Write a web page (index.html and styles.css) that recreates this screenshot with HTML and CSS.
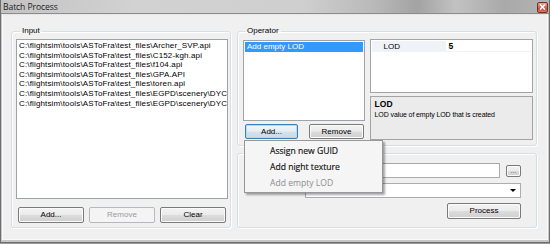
FILE: index.html
```html
<!DOCTYPE html>
<html>
<head>
<meta charset="utf-8">
<link rel="stylesheet" href="styles.css">
</head>
<body>
<div class="window">
  <div class="titlebar">
    <span class="title">Batch Process</span>
    <span class="close"><svg width="7" height="6" viewBox="0 0 7 6"><path d="M1 0.5 L6 5.5 M6 0.5 L1 5.5" stroke="#fff" stroke-width="1.6"/></svg></span>
  </div>
  <div class="client">
    <fieldset class="group input-group">
      <legend>Input</legend>
      <div class="listbox files">
        <div class="item">C:\flightsim\tools\ASToFra\test_files\Archer_SVP.api</div>
        <div class="item">C:\flightsim\tools\ASToFra\test_files\C152-kgh.api</div>
        <div class="item">C:\flightsim\tools\ASToFra\test_files\f104.api</div>
        <div class="item">C:\flightsim\tools\ASToFra\test_files\GPA.API</div>
        <div class="item">C:\flightsim\tools\ASToFra\test_files\toren.api</div>
        <div class="item">C:\flightsim\tools\ASToFra\test_files\EGPD\scenery\DYCE</div>
        <div class="item">C:\flightsim\tools\ASToFra\test_files\EGPD\scenery\DYCE</div>
      </div>
      <div class="btnrow input-btns">
        <button class="btn">Add...</button>
        <button class="btn disabled">Remove</button>
        <button class="btn">Clear</button>
      </div>
    </fieldset>
    <div class="rightcol">
      <fieldset class="group op-group">
        <legend>Operator</legend>
        <div class="op-body">
          <div class="op-left">
            <div class="listbox ops">
              <div class="item sel">Add empty LOD</div>
            </div>
            <div class="btnrow op-btns">
              <button class="btn focus">Add...</button>
              <button class="btn">Remove</button>
            </div>
          </div>
          <div class="op-right">
            <div class="propgrid">
              <div class="prow"><span class="pname">LOD</span><span class="pval">5</span></div>
            </div>
            <div class="desc">
              <div class="desc-title">LOD</div>
              <div class="desc-text">LOD value of empty LOD that is created</div>
            </div>
          </div>
        </div>
      </fieldset>
      <fieldset class="group out-group">
        <legend>Output</legend>
        <div class="out-grid">
          <span class="lbl"></span>
          <div class="textbox"></div>
          <button class="btn small">...</button>
          <span class="lbl"></span>
          <div class="combo"><span class="combo-text"></span><span class="arrow"></span></div>
          <div class="process-row"><button class="btn process">Process</button></div>
        </div>
      </fieldset>
    </div>
  </div>
  <div class="menu">
    <div class="mitem">Assign new GUID</div>
    <div class="mitem">Add night texture</div>
    <div class="mitem disabled">Add empty LOD</div>
  </div>
</div>
</body>
</html>
```

FILE: styles.css
```css
* { box-sizing: border-box; }
html, body { margin: 0; padding: 0; }
body { background: #9a9a9a; width: 550px; height: 244px; overflow: hidden; }

.window {
  position: relative;
  width: 550px;
  height: 243px;
  display: flex;
  flex-direction: column;
  border: 1px solid #6e6e6e;
  border-top: none;
  background: #c6c6c6;
  font-family: "Liberation Sans", Arial, sans-serif;
  font-size: 8px;
  color: #000;
}

.titlebar {
  height: 14px;
  display: flex;
  align-items: center;
  justify-content: space-between;
  padding: 0 1px 0 2px;
  background: linear-gradient(to right, #c3c3c3 0%, #d2d2d2 25%, #cfcfcf 55%, #b9b9b9 68%, #a3a3a3 76%, #c2c2c2 83%, #a9a9a9 92%, #b4b4b4 100%);
  border-bottom: 1px solid #8d8d8d;
}
.title {
  font-family: "Open Sans", "Liberation Sans", sans-serif;
  font-size: 8.6px;
  color: #1a1a1a;
  letter-spacing: -0.1px;
}
.close {
  width: 11px;
  height: 11px;
  border: 1px solid #7d2d25;
  border-radius: 2px;
  background: linear-gradient(#e9a497, #d0604f 50%, #c23a27 51%, #d97a62);
  display: flex;
  align-items: center;
  justify-content: center;
  margin-top: 1px;
}

.client {
  flex: 1;
  display: flex;
  align-items: flex-start;
  gap: 6px;
  margin: 0 1px 2px 1px;
  padding: 11px 10px 0 8px;
  background: #f0f0f0;
  border: 1px solid #fafafa;
  border-top-color: #e6e6e6;
}

.group {
  margin: 0;
  border: 1px solid #d5dfe5;
  border-radius: 3px;
  box-shadow: inset 1px 1px 0 #fff, 1px 1px 0 #fff;
  min-width: 0;
}
legend {
  padding: 0 2px;
  margin-left: 4px;
  line-height: 10px;
  height: 10px;
  font-size: 8px;
}

.input-group {
  width: 221px;
  height: 202px;
  padding: 3px 2px 4px 4px;
  display: flex;
  flex-direction: column;
}

.listbox {
  background: #fff;
  border: 1px solid #9ea3aa;
  overflow: hidden;
  padding: 1px 1px;
}
.item {
  line-height: 9.6px;
  height: 9.6px;
  white-space: nowrap;
  padding-left: 1px;
}
.files { height: 161px; }
.files .item {
  font-size: 8px;
  letter-spacing: 0.15px;
  padding-left: 1px;
}

.btnrow { display: flex; }
.input-btns {
  margin-top: 8px;
  padding: 0 2px 0 2px;
  justify-content: space-between;
}

.btn {
  font-family: "Liberation Sans", Arial, sans-serif;
  font-size: 8px;
  color: #000;
  height: 16px;
  width: 66px;
  padding: 0;
  border: 1px solid #7a7a7a;
  border-radius: 2px;
  background: linear-gradient(#f3f3f3 0%, #ebebeb 48%, #dcdcdc 52%, #cfcfcf 100%);
  box-shadow: inset 0 0 0 1px #fbfbfb;
  line-height: 14px;
}
.btn.disabled {
  color: #9a9a9a;
  border-color: #b5b9bd;
  background: #f4f4f4;
  box-shadow: none;
}
.btn.focus {
  border-color: #3c7fb1;
  box-shadow: inset 0 0 0 1px #a7e1f7;
  background: linear-gradient(#f0f6fa 0%, #e5eef4 48%, #d6e3ec 52%, #c9d9e4 100%);
}

.rightcol {
  width: 300px;
  display: flex;
  flex-direction: column;
  gap: 2px;
}
.op-group {
  height: 120px;
  padding: 4px 3px 6px 5px;
}
.op-group legend { margin-left: 2px; }
.op-body {
  display: flex;
  gap: 5px;
  margin-top: -1px;
}
.op-left {
  width: 122px;
  display: flex;
  flex-direction: column;
  padding-top: 1px;
}
.ops { height: 81px; }
.ops .sel {
  background: #3399ff;
  color: #fff;
  height: 10px;
  line-height: 10px;
  padding-left: 2px;
}
.op-btns {
  margin-top: 3px;
  padding-left: 2px;
  gap: 11px;
}
.op-btns .btn { height: 15px; line-height: 13px; }
.op-btns .btn:first-child { width: 53px; }
.op-btns .btn:last-child { width: 55px; }

.op-right {
  width: 164px;
  display: flex;
  flex-direction: column;
  gap: 3px;
}
.propgrid {
  height: 54px;
  background: #fff;
  border: 1px solid #a4a4a4;
  padding: 1px;
}
.prow {
  display: flex;
  height: 11px;
  line-height: 11px;
  border-bottom: 1px solid #f3f3f3;
}
.pname {
  width: 74px;
  padding-left: 12px;
  background: #eff2f6;
}
.pval {
  padding-left: 3px;
  font-weight: bold;
  font-size: 8.5px;
}
.desc {
  height: 44px;
  background: #ebebeb;
  border: 1px solid #a4a4a4;
  padding: 2px 4px;
}
.desc-title {
  font-weight: bold;
  font-size: 8.5px;
  line-height: 11px;
}
.desc-text {
  font-size: 7px;
  line-height: 10px;
  letter-spacing: -0.1px;
}

.out-group {
  height: 80px;
  padding: 5px 15px 6px 5px;
}
.out-group legend { margin-left: 0; }
.out-grid {
  display: grid;
  grid-template-columns: 56px 1fr 15px;
  column-gap: 6px;
  row-gap: 5px;
  align-items: center;
}
.textbox {
  height: 15px;
  background: #fff;
  border: 1px solid #abadb3;
  border-top-color: #a4a7ad;
}
.btn.small {
  width: 15px;
  height: 12px;
  line-height: 8px;
  font-size: 7px;
  color: #555;
}
.combo {
  grid-column: 2 / 4;
  height: 15px;
  background: #fff;
  border: 1px solid #abadb3;
  display: flex;
  align-items: center;
  justify-content: space-between;
  padding: 0 4px 0 3px;
}
.arrow {
  width: 0;
  height: 0;
  border-left: 3px solid transparent;
  border-right: 3px solid transparent;
  border-top: 3px solid #000;
}
.process-row {
  grid-column: 1 / 4;
  display: flex;
  justify-content: flex-end;
  margin-top: 0;
}
.btn.process {
  width: 74px;
  height: 16px;
}

.menu {
  position: absolute;
  left: 243px;
  top: 140px;
  width: 139px;
  height: 53px;
  padding: 2px 2px 3px 2px;
  background: #f5f5f5;
  border: 1px solid #979797;
  box-shadow: 2px 2px 2px rgba(0, 0, 0, 0.35);
  font-family: "Open Sans", "Liberation Sans", sans-serif;
  font-size: 8.6px;
  color: #111;
}
.mitem {
  height: 16px;
  line-height: 16px;
  padding-left: 23px;
  -webkit-text-stroke: 0.15px #111;
}
.mitem.disabled {
  color: #8d8d8d;
  -webkit-text-stroke: 0;
}
```
